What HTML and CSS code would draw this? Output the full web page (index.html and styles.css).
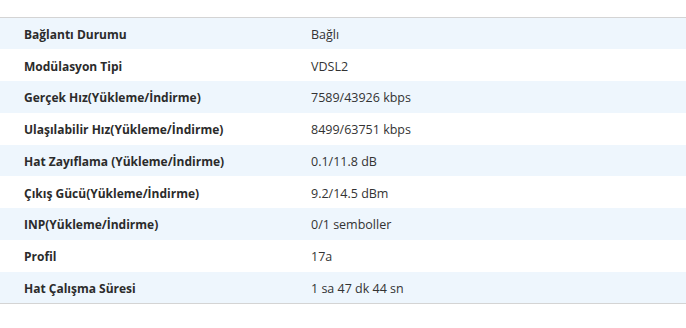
FILE: index.html
```html
<!DOCTYPE html>
<html lang="tr">
<head>
<meta charset="utf-8">
<link rel="stylesheet" href="styles.css">
</head>
<body>
<div class="panel">
  <table class="info">
    <tbody>
      <tr class="odd"><th>Bağlantı Durumu</th><td>Bağlı</td></tr>
      <tr><th>Modülasyon Tipi</th><td>VDSL2</td></tr>
      <tr class="odd"><th>Gerçek Hız(Yükleme/İndirme)</th><td>7589/43926 kbps</td></tr>
      <tr><th>Ulaşılabilir Hız(Yükleme/İndirme)</th><td>8499/63751 kbps</td></tr>
      <tr class="odd"><th>Hat Zayıflama (Yükleme/İndirme)</th><td>0.1/11.8 dB</td></tr>
      <tr><th>Çıkış Gücü(Yükleme/İndirme)</th><td>9.2/14.5 dBm</td></tr>
      <tr class="odd"><th>INP(Yükleme/İndirme)</th><td>0/1 semboller</td></tr>
      <tr><th>Profil</th><td>17a</td></tr>
      <tr class="odd"><th>Hat Çalışma Süresi</th><td>1 sa 47 dk 44 sn</td></tr>
    </tbody>
  </table>
</div>
</body>
</html>
```
FILE: styles.css
```css
html, body {
  margin: 0;
  padding: 0;
  background: #ffffff;
}
body {
  font-family: "Open Sans", "Noto Sans", "Liberation Sans", sans-serif;
  color: #333333;
  font-size: 12.5px;
}
.panel {
  padding-top: 17px;
}
.info {
  width: 100%;
  border-collapse: collapse;
  border-top: 1px solid #d4d4d4;
  border-bottom: 1px solid #d4d4d4;
}
.info tr {
  height: 31.75px;
}
.info tr.odd {
  background: #eef6fd;
}
.info th,
.info td {
  padding: 3px 0 0 0;
  text-align: left;
  vertical-align: middle;
  line-height: 18px;
}
.info th {
  width: 311px;
  padding-left: 24px;
  box-sizing: border-box;
  font-weight: 700;
  font-size: 12px;
  color: #2b2b2b;
}
.info td {
  font-weight: 400;
  color: #333333;
}
```
